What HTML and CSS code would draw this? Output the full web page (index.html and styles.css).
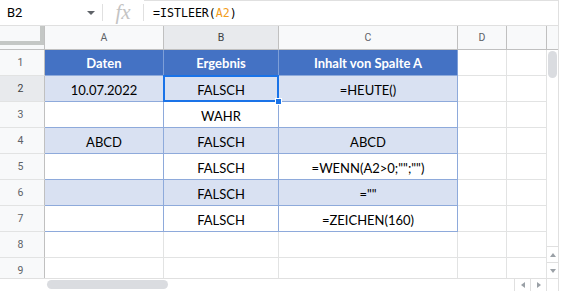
FILE: index.html
```html
<!DOCTYPE html>
<html lang="de">
<head>
<meta charset="UTF-8">
<title>ISTLEER</title>
<link rel="stylesheet" href="styles.css">
</head>
<body>
<div class="sheet">
    <div class="formula-bar">
        <div class="name-box">B2<span class="caret"></span></div>
        <div class="sep"></div>
        <div class="fx-box">fx</div>
        <div class="sep"></div>
        <div class="formula">=ISTLEER(<span class="ref">A2</span>)</div>
    </div>

    <div class="grid-wrap">
        <div class="grid">
            <div class="corner"><div class="freeze"></div></div>
            <div class="ch">A</div>
            <div class="ch sel">B</div>
            <div class="ch">C</div>
            <div class="ch">D</div>
            <div class="ch"></div>

            <div class="rh">1</div>
            <div class="th">Daten</div>
            <div class="th">Ergebnis</div>
            <div class="th">Inhalt von Spalte A</div>
            <div class="c"></div>
            <div class="c"></div>

            <div class="rh sel">2</div>
            <div class="t band">10.07.2022</div>
            <div class="t band active">FALSCH</div>
            <div class="t band">=HEUTE()</div>
            <div class="c"></div>
            <div class="c"></div>

            <div class="rh">3</div>
            <div class="t"></div>
            <div class="t">WAHR</div>
            <div class="t"></div>
            <div class="c"></div>
            <div class="c"></div>

            <div class="rh">4</div>
            <div class="t band">ABCD</div>
            <div class="t band">FALSCH</div>
            <div class="t band">ABCD</div>
            <div class="c"></div>
            <div class="c"></div>

            <div class="rh">5</div>
            <div class="t"></div>
            <div class="t">FALSCH</div>
            <div class="t">=WENN(A2&gt;0;"";"")</div>
            <div class="c"></div>
            <div class="c"></div>

            <div class="rh">6</div>
            <div class="t band"></div>
            <div class="t band">FALSCH</div>
            <div class="t band">=""</div>
            <div class="c"></div>
            <div class="c"></div>

            <div class="rh">7</div>
            <div class="t"></div>
            <div class="t">FALSCH</div>
            <div class="t">=ZEICHEN(160)</div>
            <div class="c"></div>
            <div class="c"></div>

            <div class="rh">8</div>
            <div class="c"></div>
            <div class="c"></div>
            <div class="c"></div>
            <div class="c"></div>
            <div class="c"></div>

            <div class="rh">9</div>
            <div class="c"></div>
            <div class="c"></div>
            <div class="c"></div>
            <div class="c"></div>
            <div class="c"></div>
        </div>

        <div class="vscroll">
            <div class="vs-head"></div>
            <div class="vs-track"><div class="vs-thumb"></div></div>
            <div class="btn"><span class="arr up"></span></div>
            <div class="btn"><span class="arr down"></span></div>
        </div>
    </div>

    <div class="hscroll">
        <div class="hs-track"><div class="hs-thumb"></div></div>
        <div class="hbtn"><span class="arr left"></span></div>
        <div class="hbtn"><span class="arr right"></span></div>
        <div class="hs-corner"></div>
    </div>
</div>
</body>
</html>
```

FILE: styles.css
```css
body {
    margin: 0;
    background: #fff;
    font-family: Roboto, Arial, sans-serif;
}
.sheet {
    width: 559px;
}

/* formula bar */
.formula-bar {
    display: flex;
    align-items: center;
    height: 26px;
    box-sizing: border-box;
    border-bottom: 1px solid #e0e0e0;
}
.name-box {
    width: 102px;
    display: flex;
    align-items: center;
    padding: 0 7px;
    box-sizing: border-box;
    font-size: 13px;
    color: #000;
}
.caret {
    margin-left: auto;
    border-left: 4px solid transparent;
    border-right: 4px solid transparent;
    border-top: 4px solid #5f6368;
}
.sep {
    width: 1px;
    height: 17px;
    background: #e0e0e0;
}
.fx-box {
    width: 40px;
    text-align: center;
    font: italic 21px "Liberation Serif", serif;
    color: #c4c4c4;
    line-height: 25px;
}
.formula {
    flex: 1;
    align-self: stretch;
    display: flex;
    align-items: center;
    padding-left: 9px;
    font: 11.6px "DejaVu Sans Mono", monospace;
    color: #000;
    border-top: 1px solid #e0e0e0;
    border-right: 1px solid #e0e0e0;
}
.ref { color: #f29d1c; }

/* grid */
.grid-wrap {
    display: flex;
    height: 252px;
    overflow: hidden;
}
.grid {
    display: grid;
    grid-template-columns: 45px 119px 115px 179px 49px 40px;
    grid-template-rows: 24px;
    grid-auto-rows: 26px;
}
.grid > div {
    box-sizing: border-box;
    border-right: 1px solid #e2e3e3;
    border-bottom: 1px solid #e2e3e3;
    display: flex;
    justify-content: center;
}
.corner {
    background: #f8f9fa;
    border-color: #c0c0c0 !important;
}
.freeze {
    width: 100%;
    height: 19px;
    box-sizing: border-box;
    border-right: 4px solid #c4c7c5;
    border-bottom: 4px solid #c4c7c5;
}
.ch, .rh {
    align-items: center;
    background: #f8f9fa;
    color: #5f6368;
    font-size: 10.5px;
}
.ch {
    border-right-color: #c0c0c0 !important;
    border-bottom-color: #c0c0c0 !important;
}
.rh {
    border-right-color: #c0c0c0 !important;
    padding-right: 3px;
}
.ch.sel, .rh.sel {
    background: #e8eaed;
    color: #3c4043;
}
.th, .t {
    align-items: flex-end;
    padding-bottom: 3px;
    font-family: Lato, "Open Sans", sans-serif;
    font-size: 13px;
    line-height: 16px;
    color: #000;
    border-right-color: #8eaadb !important;
    border-bottom-color: #8eaadb !important;
}
.th {
    background: #4472c4;
    color: #fff;
    font-weight: bold;
    border-right-color: #7e9fd8 !important;
    padding-bottom: 4px;
}
.band { background: #d9e1f2; }
.active {
    position: relative;
}
.active::before {
    content: "";
    position: absolute;
    inset: -1px -1px -1px -1px;
    border: 2px solid #1a73e8;
}
.active::after {
    content: "";
    position: absolute;
    right: -4px;
    bottom: -4px;
    width: 5px;
    height: 5px;
    background: #1a73e8;
    border: 1px solid #fff;
    z-index: 2;
}

/* scrollbars */
.vscroll {
    width: 12px;
    display: flex;
    flex-direction: column;
    box-sizing: border-box;
    border-right: 1px solid #e0e0e0;
}
.vs-head {
    height: 24px;
    box-sizing: border-box;
    background: #f8f9fa;
    border-bottom: 1px solid #c0c0c0;
}
.vs-track {
    flex: 1;
    padding: 1px 0 0 1px;
}
.vs-thumb {
    width: 9px;
    height: 27px;
    border-radius: 5px;
    background: #dadce0;
}
.btn {
    height: 16px;
    box-sizing: border-box;
    border-top: 1px solid #e0e0e0;
    display: flex;
    align-items: center;
    justify-content: center;
}
.arr {
    width: 0;
    height: 0;
}
.up {
    border-left: 3px solid transparent;
    border-right: 3px solid transparent;
    border-bottom: 4px solid #9aa0a6;
}
.down {
    border-left: 3px solid transparent;
    border-right: 3px solid transparent;
    border-top: 4px solid #9aa0a6;
}
.left {
    border-top: 3px solid transparent;
    border-bottom: 3px solid transparent;
    border-right: 4px solid #9aa0a6;
}
.right {
    border-top: 3px solid transparent;
    border-bottom: 3px solid transparent;
    border-left: 4px solid #9aa0a6;
}
.hscroll {
    display: flex;
    height: 13px;
    box-sizing: border-box;
    border-top: 1px solid #e0e0e0;
}
.hs-track {
    flex: 1;
    padding: 1px 0 0 47px;
}
.hs-thumb {
    width: 121px;
    height: 9px;
    border-radius: 5px;
    background: #dadce0;
}
.hbtn {
    width: 16px;
    box-sizing: border-box;
    border-left: 1px solid #e0e0e0;
    display: flex;
    align-items: center;
    justify-content: center;
}
.hs-corner {
    width: 13px;
    box-sizing: border-box;
    border-left: 1px solid #e0e0e0;
    border-right: 1px solid #e0e0e0;
}
```
